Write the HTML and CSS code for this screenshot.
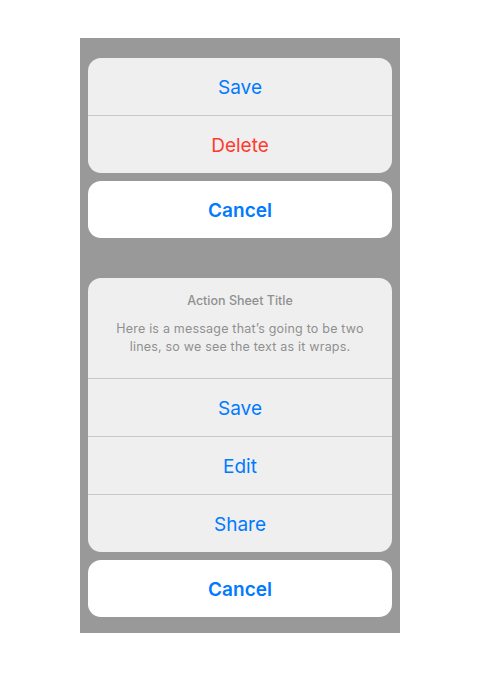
FILE: index.html
```html
<!DOCTYPE html>
<html>
<head>
<meta charset="utf-8">
<link rel="stylesheet" href="styles.css">
</head>
<body>
<div class="panel">
  <div class="sheet">
    <div class="group">
      <div class="row">Save</div>
      <div class="row destructive">Delete</div>
    </div>
    <div class="cancel">Cancel</div>
  </div>
  <div class="sheet">
    <div class="group">
      <div class="header">
        <div class="title">Action Sheet Title</div>
        <div class="message">Here is a message that’s going to be two lines, so we see the text as it wraps.</div>
      </div>
      <div class="row">Save</div>
      <div class="row">Edit</div>
      <div class="row">Share</div>
    </div>
    <div class="cancel">Cancel</div>
  </div>
</div>
</body>
</html>
```
FILE: styles.css
```css
html, body {
  margin: 0;
  padding: 0;
  background: #ffffff;
}
body {
  font-family: Inter, "Noto Sans", sans-serif;
}
.panel {
  width: 320px;
  margin: 38px auto 0;
  background: #999999;
  padding: 20px 8px 16px;
  box-sizing: border-box;
  display: flex;
  flex-direction: column;
  gap: 40px;
}
.sheet {
  display: flex;
  flex-direction: column;
  gap: 8px;
}
.group {
  background: #efefef;
  border-radius: 13px;
  overflow: hidden;
}
.row {
  height: 55px;
  padding-top: 2px;
  display: flex;
  align-items: center;
  justify-content: center;
  font-size: 19px;
  color: #007aff;
  border-top: 1px solid #c8c8c8;
}
.group > .row:first-child {
  border-top: none;
}
.row.destructive {
  color: #ff3b30;
}
.header {
  height: 100px;
  box-sizing: border-box;
  padding-top: 15px;
  text-align: center;
  color: #8f8f8f;
}
.title {
  font-size: 12.5px;
  font-weight: 500;
  line-height: 16px;
}
.message {
  font-size: 12.5px;
  line-height: 18px;
  margin: 11px 24px 0;
  letter-spacing: 0.2px;
}
.cancel {
  height: 55px;
  padding-top: 2px;
  background: #ffffff;
  border-radius: 13px;
  display: flex;
  align-items: center;
  justify-content: center;
  font-size: 19px;
  font-weight: 600;
  color: #007aff;
}
```
